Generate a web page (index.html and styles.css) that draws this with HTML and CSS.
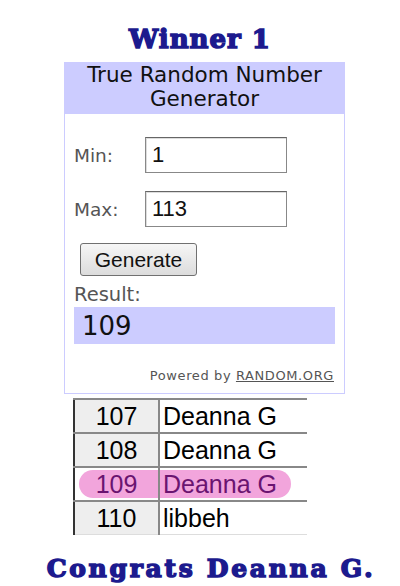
FILE: index.html
```html
<!DOCTYPE html>
<html>
    <head>
        <title>Winner 1</title>
        <link rel="stylesheet" href="styles.css">
    </head>
    <body>
        <h1 class="title">Winner 1</h1>
        <div class="widget">
            <div class="widget-head">True Random Number Generator</div>
            <div class="widget-body">
                <div class="field">
                    <label for="min">Min:</label>
                    <input type="text" id="min" value="1">
                </div>
                <div class="field">
                    <label for="max">Max:</label>
                    <input type="text" id="max" value="113">
                </div>
                <button class="generate">Generate</button>
                <div class="result-label">Result:</div>
                <div class="result">109</div>
                <div class="powered">Powered by <span class="link">RANDOM.ORG</span></div>
            </div>
        </div>
        <table class="sheet">
            <tr><td class="num">107</td><td class="name">Deanna G</td></tr>
            <tr><td class="num">108</td><td class="name">Deanna G</td></tr>
            <tr class="winner"><td class="num"><span class="mark"></span>109</td><td class="name">Deanna G</td></tr>
            <tr><td class="num">110</td><td class="name">libbeh</td></tr>
        </table>
        <h2 class="congrats">Congrats Deanna G.</h2>
    </body>
</html>
```

FILE: styles.css
```css
html {
    height:100%;
}

body {
    margin:0;
    padding:0;
    background:#fff;
    width:400px;
    height:586px;
    overflow:hidden;
}

.title,
.congrats {
    margin:0;
    text-align:center;
    color:#1c1a8e;
    font-family:"DejaVu Serif", serif;
    font-weight:bold;
    -webkit-text-stroke:1.5px #1c1a8e;
}

.title {
    padding-top:24px;
    font-size:26px;
    line-height:30px;
    letter-spacing:1px;
}

.widget {
    margin:8px 0 0 64px;
    width:279px;
    border:1px solid #ccccff;
    font-family:"DejaVu Sans", sans-serif;
}

.widget-head {
    background:#ccccff;
    height:51px;
    padding:0 4px;
    text-align:center;
    font-size:21.5px;
    line-height:24px;
    color:#111;
}

.widget-body {
    padding:23px 0 4px 9px;
    height:252px;
    box-sizing:content-box;
}

.field {
    display:flex;
    align-items:center;
    height:36px;
    margin-bottom:18px;
}

.field label {
    width:71px;
    font-size:18.5px;
    color:#555;
}

.field input {
    width:142px;
    height:36px;
    box-sizing:border-box;
    border:1px solid #888;
    border-top-color:#666;
    box-shadow:inset 1px 1px 0 #ddd;
    padding:0 6px;
    font-family:"Liberation Sans", sans-serif;
    font-size:22px;
    color:#111;
}

.generate {
    display:block;
    margin:-2px 0 0 6px;
    width:117px;
    height:33px;
    border:1px solid #707070;
    border-radius:3px;
    background:linear-gradient(#f6f6f6, #dcdcdc);
    font-family:"Liberation Sans", sans-serif;
    font-size:21px;
    color:#111;
    padding:0;
}

.result-label {
    margin-top:7px;
    font-size:19.5px;
    line-height:24px;
    color:#555;
}

.result {
    width:253px;
    height:37px;
    background:#ccccff;
    padding-left:8px;
    font-size:26px;
    line-height:38px;
    color:#111;
}

.powered {
    margin:24px 10px 0 0;
    text-align:right;
    font-size:13px;
    letter-spacing:0.6px;
    color:#555;
}

.powered .link {
    text-decoration:underline;
}

.sheet {
    position:relative;
    z-index:0;
    margin:4px 0 0 73px;
    border-collapse:collapse;
    font-family:"Liberation Sans", sans-serif;
    font-size:25px;
    border-left:2px solid #333;
}

.sheet td {
    height:32px;
    padding:0;
    border-top:2px solid #888;
    line-height:32px;
}

.sheet tr:last-child td {
    border-bottom:1px solid #ddd;
}

.sheet .num {
    position:relative;
    width:83px;
    background:#eeeeee;
    text-align:center;
    border-right:2px solid #888;
}

.sheet .name {
    width:144px;
    padding-left:3px;
}

.sheet .winner td {
    color:#6a1470;
    background:transparent;
}

.mark {
    position:absolute;
    left:4px;
    top:2px;
    width:212px;
    height:28px;
    border-radius:14px;
    background:#f2a5dc;
    z-index:-1;
}

.congrats {
    padding:20px 0 0 22px;
    font-size:25px;
    line-height:28px;
    letter-spacing:2.7px;
}
```
